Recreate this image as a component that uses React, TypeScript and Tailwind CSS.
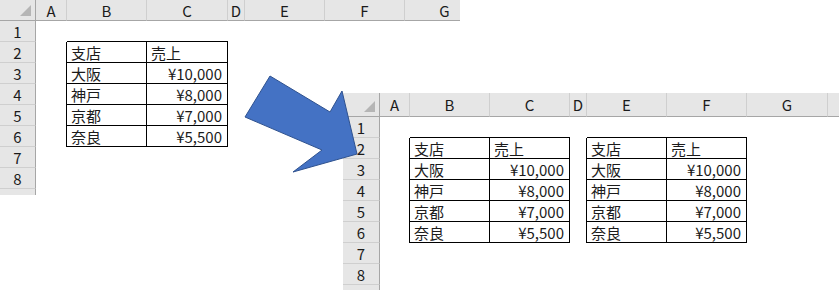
import React from "react";

type Col = { label: string; w: string };

const DATA = [
  ["支店", "売上"],
  ["大阪", "¥10,000"],
  ["神戸", "¥8,000"],
  ["京都", "¥7,000"],
  ["奈良", "¥5,500"],
];

// row 9 is only a sliver at the bottom edge, so it has no number drawn
const ROWS = [1, 2, 3, 4, 5, 6, 7, 8, 9];

// sheet tables start on row 2 and are two columns wide
function cellInfo(r: number, ci: number, tables: number[]) {
  const t = tables.find((s) => ci >= s && ci < s + 2);
  const inRows = r >= 2 && r <= 6;
  if (t !== undefined && inRows) {
    const text = DATA[r - 2][ci - t];
    const right = ci - t === 1 && r > 2;
    return {
      text,
      cls: `border-r border-b border-black ${right ? "justify-end pr-[5px]" : "justify-start pl-1"}`,
    };
  }
  if (inRows && tables.includes(ci + 1)) return { text: "", cls: "border-r border-black" };
  if (r === 1 && t !== undefined) return { text: "", cls: "border-b border-black" };
  return { text: "", cls: "" };
}

function Sheet({
  cols,
  headW,
  headH,
  tables,
  className,
}: {
  cols: Col[];
  headW: string;
  headH: string;
  tables: number[];
  className: string;
}) {
  return (
    <div className={`overflow-hidden bg-white text-[15px] text-[#1b1b1b] ${className}`}>
      {/* column headers */}
      <div className={`flex ${headH}`}>
        <div
          className={`${headW} shrink-0 flex items-end justify-end pr-1 pb-1 bg-[#e6e6e6] border-r border-b border-[#a6a6a6]`}
        >
          <svg width="11" height="11" viewBox="0 0 11 11">
            <polygon points="11,0 11,11 0,11" fill="#b5b5b5" />
          </svg>
        </div>
        {cols.map((c, i) => (
          <div
            key={i}
            className={`${c.w} shrink-0 flex items-center justify-center bg-[#e6e6e6] border-r border-r-[#cfcfcf] border-b border-b-[#a6a6a6] leading-none`}
          >
            {c.label}
          </div>
        ))}
      </div>
      {ROWS.map((r) => (
        <div key={r} className="flex h-[21px]">
          <div
            className={`${headW} shrink-0 flex items-center justify-center bg-[#e6e6e6] border-r border-r-[#a6a6a6] border-b border-b-[#cfcfcf] leading-none`}
          >
            {r < 9 ? r : ""}
          </div>
          {cols.map((c, ci) => {
            const info = cellInfo(r, ci, tables);
            return (
              <div
                key={ci}
                className={`${c.w} shrink-0 flex items-center whitespace-nowrap leading-none ${info.cls}`}
              >
                {info.text}
              </div>
            );
          })}
        </div>
      ))}
    </div>
  );
}

const LEFT_COLS: Col[] = [
  { label: "A", w: "w-[31px]" },
  { label: "B", w: "w-[80px]" },
  { label: "C", w: "w-[81px]" },
  { label: "D", w: "w-[17px]" },
  { label: "E", w: "w-[80px]" },
  { label: "F", w: "w-[80px]" },
  { label: "G", w: "w-[80px]" },
];

const RIGHT_COLS: Col[] = [
  { label: "A", w: "w-[30px]" },
  { label: "B", w: "w-[80px]" },
  { label: "C", w: "w-[80px]" },
  { label: "D", w: "w-[17px]" },
  { label: "E", w: "w-[80px]" },
  { label: "F", w: "w-[80px]" },
  { label: "G", w: "w-[81px]" },
  { label: "", w: "w-[80px]" },
];

export default function App() {
  return (
    <div className="relative w-[839px] h-[290px] overflow-hidden bg-white font-['Noto_Sans_CJK_JP',sans-serif]">
      <Sheet
        cols={LEFT_COLS}
        headW="w-[36px]"
        headH="h-[21px]"
        tables={[1]}
        className="absolute left-0 top-0 w-[460px] h-[195px]"
      />
      <Sheet
        cols={RIGHT_COLS}
        headW="w-[37px]"
        headH="h-[24px]"
        tables={[1, 4]}
        className="absolute left-[343px] top-[93px] w-[496px] h-[197px]"
      />
      {/* block arrow */}
      <svg className="absolute left-0 top-0" width="839" height="290">
        <polygon
          points="270,76 330,112 342,91 357,154 293,172 322,150 245,117"
          fill="#4472c4"
          stroke="#2f528f"
          strokeWidth="1"
          strokeLinejoin="miter"
        />
      </svg>
    </div>
  );
}
